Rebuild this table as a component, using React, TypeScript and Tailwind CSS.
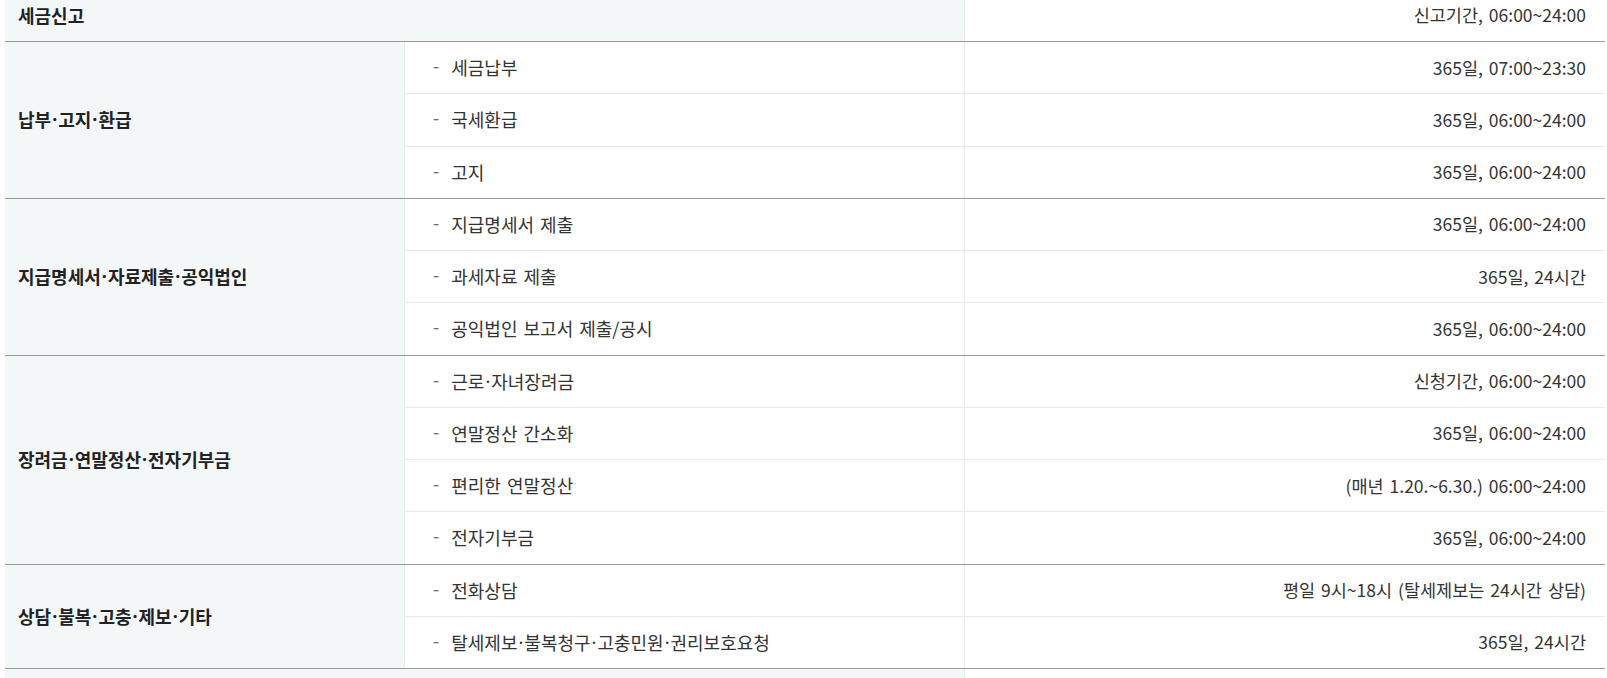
import React from 'react';

type Item = { label: string; time: string };
type Group = { title: string; items: Item[] };

const groups: Group[] = [
    {
        title: '납부·고지·환급',
        items: [
            { label: '세금납부', time: '365일, 07:00~23:30' },
            { label: '국세환급', time: '365일, 06:00~24:00' },
            { label: '고지', time: '365일, 06:00~24:00' },
        ],
    },
    {
        title: '지급명세서·자료제출·공익법인',
        items: [
            { label: '지급명세서 제출', time: '365일, 06:00~24:00' },
            { label: '과세자료 제출', time: '365일, 24시간' },
            { label: '공익법인 보고서 제출/공시', time: '365일, 06:00~24:00' },
        ],
    },
    {
        title: '장려금·연말정산·전자기부금',
        items: [
            { label: '근로·자녀장려금', time: '신청기간, 06:00~24:00' },
            { label: '연말정산 간소화', time: '365일, 06:00~24:00' },
            { label: '편리한 연말정산', time: '(매년 1.20.~6.30.) 06:00~24:00' },
            { label: '전자기부금', time: '365일, 06:00~24:00' },
        ],
    },
    {
        title: '상담·불복·고충·제보·기타',
        items: [
            { label: '전화상담', time: '평일 9시~18시 (탈세제보는 24시간 상담)' },
            { label: '탈세제보·불복청구·고충민원·권리보호요청', time: '365일, 24시간' },
        ],
    },
];

// CJK font draws the middle dot full-width, the original uses a narrow one
function Dotted({ text }: { text: string }) {
    const parts = text.split('·');
    return (
        <>
            {parts.map((p, i) => (
                <React.Fragment key={i}>
                    {i > 0 && <span className="mx-[1px]" style={{ fontFamily: '"Noto Sans", sans-serif' }}>·</span>}
                    {p}
                </React.Fragment>
            ))}
        </>
    );
}

function SingleRow({ title, time }: { title: string; time: string }) {
    return (
        <div className="flex h-[52.25px] border-b border-[#999]">
            <div className="w-[960px] shrink-0 bg-[#f4f7f8] border-r border-[#e6e9eb] flex items-center pl-[13px] font-bold text-[#222]">
                {title}
            </div>
            <div className="flex-1 flex items-center justify-end pr-[19px] text-[17.5px] text-[#333] [word-spacing:2px]">{time}</div>
        </div>
    );
}

export default function App() {
    return (
        <div
            className="w-[1607px] h-[678px] overflow-hidden bg-white text-[18px]"
            style={{ fontFamily: '"Noto Sans CJK KR", "Noto Sans", sans-serif' }}
        >
            <div className="ml-[5px] w-[1600px] mt-[-10.25px]">
                <SingleRow title="세금신고" time="신고기간, 06:00~24:00" />

                {groups.map(group => (
                    <div key={group.title} className="flex border-b border-[#999]">
                        <div className="w-[400px] shrink-0 bg-[#f4f7f8] border-r border-[#e6e9eb] flex items-center pl-[13px] font-bold text-[#222]">
                            <Dotted text={group.title} />
                        </div>
                        <div className="flex-1 flex flex-col">
                            {group.items.map((item, i) => (
                                <div
                                    key={item.label}
                                    className={`flex ${i < group.items.length - 1 ? 'h-[52.25px] border-b border-[#ebebeb]' : 'h-[51.25px]'}`}
                                >
                                    <div className="w-[560px] shrink-0 border-r border-[#e6e9eb] flex items-center pl-[28px] text-[#333] [word-spacing:2px]">
                                        <span className="text-[#666] mr-[12px] -mt-[4px]">-</span>
                                        <Dotted text={item.label} />
                                    </div>
                                    <div className="flex-1 flex items-center justify-end pr-[19px] text-[17.5px] text-[#333] [word-spacing:2px]">
                                        {item.time}
                                    </div>
                                </div>
                            ))}
                        </div>
                    </div>
                ))}

                <SingleRow title="" time="" />
            </div>
        </div>
    );
}
